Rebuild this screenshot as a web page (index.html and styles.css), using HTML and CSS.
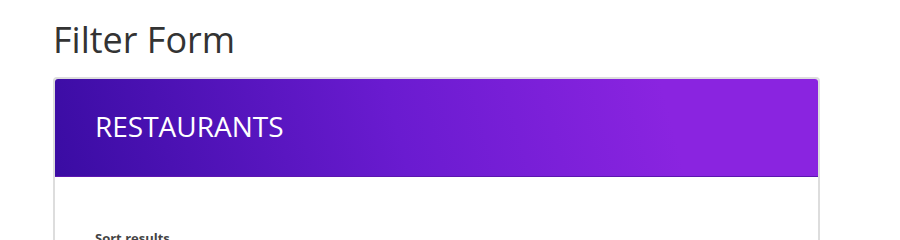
FILE: index.html
```html
<!DOCTYPE html>
<html>
<head>
<meta charset="utf-8">
<link rel="stylesheet" href="styles.css">
</head>
<body>
<div class="page">
  <h2 class="title">Filter Form</h2>
  <div class="card">
    <div class="card-header">RESTAURANTS</div>
    <div class="card-body">
      <label class="field-label">Sort results</label>
    </div>
  </div>
</div>
</body>
</html>
```
FILE: styles.css
```css
html, body {
  margin: 0;
  padding: 0;
  background: #ffffff;
  font-family: "Open Sans", "Liberation Sans", sans-serif;
}
.page {
  padding: 20px 0 0 53px;
  width: 767px;
}
.title {
  margin: 0 0 17px 0;
  font-size: 36px;
  font-weight: 400;
  line-height: 40px;
  color: #333333;
}
.card {
  border: 2px solid #dddddd;
  border-radius: 4px;
  background: #ffffff;
}
.card-header {
  padding: 32px 40px 35px 40px;
  font-size: 28px;
  line-height: 30px;
  color: #ffffff;
  background: linear-gradient(75deg, #3a0ca3 0%, #6a1bd0 45%, #8a24e0 80%, #8a24e0 100%);
  border-top-left-radius: 3px;
  border-top-right-radius: 3px;
  border-bottom: 1px solid #5b16b0;
}
.card-body {
  padding: 51px 40px 40px 40px;
}
.field-label {
  display: block;
  font-size: 13px;
  font-weight: 700;
  color: #444444;
  line-height: 20px;
}
```
